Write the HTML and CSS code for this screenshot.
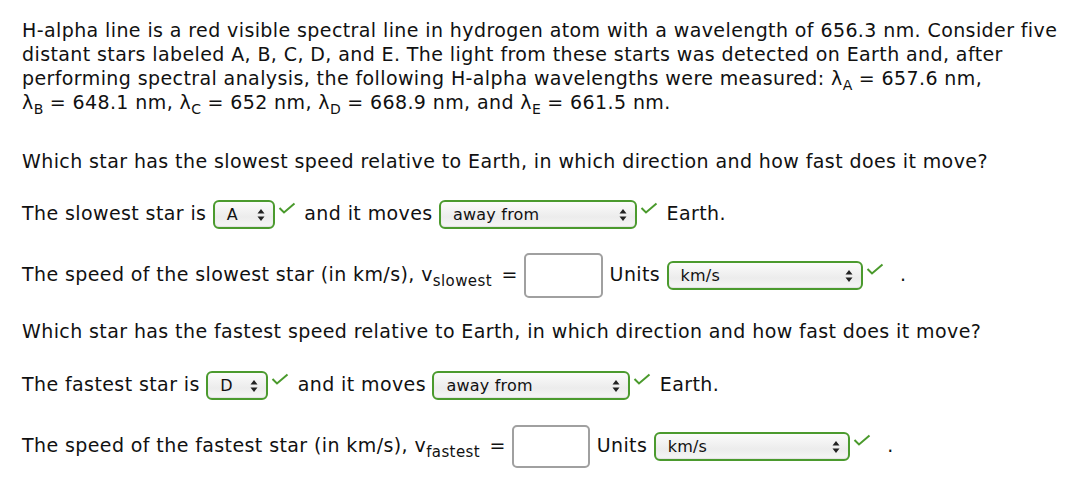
FILE: index.html
```html
<!DOCTYPE html>
<html>
<head>
<meta charset="utf-8">
<link rel="stylesheet" href="styles.css">
</head>
<body>
<div class="q">
  <p class="intro">H-alpha line is a red visible spectral line in hydrogen atom with a wavelength of 656.3 nm. Consider five<br>distant stars labeled A, B, C, D, and E. The light from these starts was detected on Earth and, after<br>performing spectral analysis, the following H-alpha wavelengths were measured: λ<sub>A</sub> = 657.6 nm,<br>λ<sub>B</sub> = 648.1 nm, λ<sub>C</sub> = 652 nm, λ<sub>D</sub> = 668.9 nm, and λ<sub>E</sub> = 661.5 nm.</p>

  <p class="ask">Which star has the slowest speed relative to Earth, in which direction and how fast does it move?</p>
  <div class="row">The slowest star is <span class="sel sel-s"><span class="val">A</span><svg class="arr" viewBox="0 0 8 14" width="8" height="14"><path d="M4 1 L7.5 5.5 H0.5 Z M4 13 L7.5 8.5 H0.5 Z" fill="#222"/></svg></span><svg class="chk" viewBox="0 0 18 12" width="18" height="12"><path d="M1.5 6 L6 10.5 L16.5 1.5" fill="none" stroke="#4a9a2c" stroke-width="2"/></svg> and it moves <span class="sel sel-l"><span class="val">away from</span><svg class="arr" viewBox="0 0 8 14" width="8" height="14"><path d="M4 1 L7.5 5.5 H0.5 Z M4 13 L7.5 8.5 H0.5 Z" fill="#222"/></svg></span><svg class="chk" viewBox="0 0 18 12" width="18" height="12"><path d="M1.5 6 L6 10.5 L16.5 1.5" fill="none" stroke="#4a9a2c" stroke-width="2"/></svg> Earth.</div>
  <div class="row speed">The speed of the slowest star (in km/s), v<sub class="vs">slowest</sub> = <span class="inp"></span> Units <span class="sel sel-u"><span class="val">km/s</span><svg class="arr" viewBox="0 0 8 14" width="8" height="14"><path d="M4 1 L7.5 5.5 H0.5 Z M4 13 L7.5 8.5 H0.5 Z" fill="#222"/></svg></span><svg class="chk" viewBox="0 0 18 12" width="18" height="12"><path d="M1.5 6 L6 10.5 L16.5 1.5" fill="none" stroke="#4a9a2c" stroke-width="2"/></svg> <span class="dot">.</span></div>

  <p class="ask ask2">Which star has the fastest speed relative to Earth, in which direction and how fast does it move?</p>
  <div class="row row2">The fastest star is <span class="sel sel-s"><span class="val">D</span><svg class="arr" viewBox="0 0 8 14" width="8" height="14"><path d="M4 1 L7.5 5.5 H0.5 Z M4 13 L7.5 8.5 H0.5 Z" fill="#222"/></svg></span><svg class="chk" viewBox="0 0 18 12" width="18" height="12"><path d="M1.5 6 L6 10.5 L16.5 1.5" fill="none" stroke="#4a9a2c" stroke-width="2"/></svg> and it moves <span class="sel sel-l"><span class="val">away from</span><svg class="arr" viewBox="0 0 8 14" width="8" height="14"><path d="M4 1 L7.5 5.5 H0.5 Z M4 13 L7.5 8.5 H0.5 Z" fill="#222"/></svg></span><svg class="chk" viewBox="0 0 18 12" width="18" height="12"><path d="M1.5 6 L6 10.5 L16.5 1.5" fill="none" stroke="#4a9a2c" stroke-width="2"/></svg> Earth.</div>
  <div class="row speed">The speed of the fastest star (in km/s), v<sub class="vs">fastest</sub> = <span class="inp inp2"></span> Units <span class="sel sel-u"><span class="val">km/s</span><svg class="arr" viewBox="0 0 8 14" width="8" height="14"><path d="M4 1 L7.5 5.5 H0.5 Z M4 13 L7.5 8.5 H0.5 Z" fill="#222"/></svg></span><svg class="chk" viewBox="0 0 18 12" width="18" height="12"><path d="M1.5 6 L6 10.5 L16.5 1.5" fill="none" stroke="#4a9a2c" stroke-width="2"/></svg> <span class="dot">.</span></div>
</div>
</body>
</html>
```
FILE: styles.css
```css
html, body {
  margin: 0;
  padding: 0;
  background: #fff;
}
.q {
  padding: 18px 22px 0 22px;
  font-family: "DejaVu Sans", Verdana, sans-serif;
  font-size: 19px;
  letter-spacing: 0.4px;
  color: #111;
  line-height: 24px;
}
p {
  margin: 0;
}
.intro {
  white-space: nowrap;
}
sub {
  font-size: 14px;
  letter-spacing: 0;
  vertical-align: -5px;
  line-height: 0;
}
sub.vs {
  font-size: 15px;
  letter-spacing: 0.4px;
  margin-right: 3px;
}
.ask {
  margin-top: 35px;
  white-space: nowrap;
}
.ask2 {
  margin-top: 21px;
}
.row {
  margin-top: 25px;
  height: 30px;
  line-height: 30px;
  white-space: nowrap;
}
.row2 {
  margin-top: 26px;
}
.speed {
  margin-top: 22px;
  height: 48px;
  line-height: 48px;
}
.sel {
  display: inline-flex;
  align-items: center;
  justify-content: space-between;
  box-sizing: border-box;
  height: 29px;
  border: 2px solid #4b9a2e;
  border-radius: 6px;
  background: linear-gradient(#fbfbfb, #ececec 60%, #f6f6f6);
  box-shadow: inset 0 -1px 1px rgba(0,0,0,0.08);
  padding: 0 8px 0 12px;
  font-size: 16px;
  letter-spacing: 0.2px;
  line-height: 25px;
  vertical-align: middle;
  color: #111;
}
.sel-s { width: 62px; }
.sel-l { width: 198px; }
.sel-u { width: 196px; }
.chk {
  vertical-align: 6px;
  margin-left: 3px;
  margin-right: 2px;
}
.inp {
  display: inline-block;
  box-sizing: border-box;
  width: 79px;
  height: 45px;
  border: 2px solid #a0a0a0;
  border-radius: 5px;
  background: #fff;
  vertical-align: middle;
}
.inp2 {
  width: 78px;
  height: 43px;
}
.dot {
  margin-left: 8px;
}
```
